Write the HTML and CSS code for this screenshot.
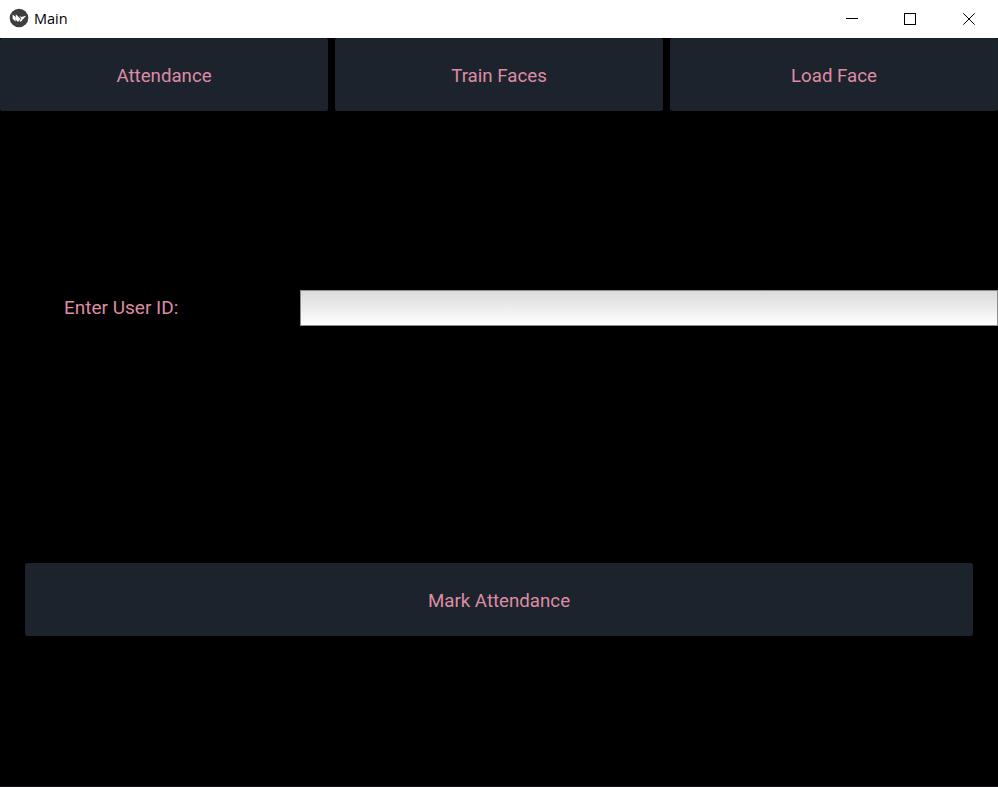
FILE: index.html
```html
<!DOCTYPE html>
<html lang="en">
<head>
<meta charset="utf-8">
<title>Main</title>
<link rel="stylesheet" href="styles.css">
</head>
<body>
<div class="window">
  <header class="titlebar">
    <svg class="logo" width="20" height="20" viewBox="0 0 20 20">
      <circle cx="10" cy="10" r="9.3" fill="#3e3e40"/>
      <path d="M3.6 6.4 L6.6 9 V13.6 L3.6 10.8Z M6.8 6.2 L11.4 10.8 L9 14 L6.8 11.8Z M10.4 7.8 L12.3 9 L17.2 7.8 L11.8 13.8 L10.4 13 L12.2 10.6Z" fill="#fff"/>
    </svg>
    <span class="title">Main</span>
    <div class="controls">
      <svg width="58" height="38" viewBox="0 0 58 38"><path d="M22 18.5H34" stroke="#000"/></svg>
      <svg width="58" height="38" viewBox="0 0 58 38"><rect x="22.5" y="13.5" width="11" height="11" fill="none" stroke="#000"/></svg>
      <svg width="58" height="38" viewBox="0 0 58 38"><path d="M23.3 13.3L34.7 24.7M34.7 13.3L23.3 24.7" stroke="#000"/></svg>
    </div>
  </header>
  <nav class="tabs">
    <button class="btn">Attendance</button>
    <button class="btn">Train Faces</button>
    <button class="btn">Load Face</button>
  </nav>
  <main class="form">
    <div class="row">
      <label class="label" for="user-id">Enter User ID:</label>
      <input class="field" id="user-id" type="text">
    </div>
    <button class="btn submit">Mark Attendance</button>
  </main>
</div>
</body>
</html>
```
FILE: styles.css
```css
* { box-sizing: border-box; }
body { margin: 0; background: #000; }
.window {
  display: flex;
  flex-direction: column;
  height: 787px;
  border-bottom: 1px solid #1c1117;
  font-family: Roboto, sans-serif;
  overflow: hidden;
}
.titlebar {
  display: flex;
  align-items: center;
  height: 38px;
  flex: none;
  padding-left: 9px;
  background: #fff;
  color: #000;
}
.logo { margin-top: -2px; }
.title {
  margin-left: 5px;
  font: 14.5px/20px "Open Sans", sans-serif;
}
.controls {
  display: flex;
  margin-left: auto;
}
.controls svg { display: block; }
.tabs {
  display: grid;
  grid-template-columns: repeat(3, 1fr);
  gap: 7px;
  height: 73px;
  flex: none;
}
.btn {
  margin: 0;
  padding: 3px 0 0;
  border: 1px solid #19232a;
  border-radius: 2px;
  background: #1c232c;
  color: #de8ca5;
  font: 18.7px/22px Roboto, sans-serif;
}
.form {
  display: flex;
  flex-direction: column;
  padding-top: 179px;
}
.row {
  display: flex;
  align-items: center;
  height: 36px;
}
.label {
  width: 300px;
  padding-left: 64px;
  color: #de8ca5;
  font-size: 19px;
  line-height: 22px;
}
.field {
  flex: 1;
  height: 36px;
  padding: 0 8px;
  border: 1px solid #8c8c8c;
  border-radius: 0;
  outline: 0;
  background: linear-gradient(#dadada, #fff);
  font: 19px Roboto, sans-serif;
}
.submit {
  height: 73px;
  margin: 237px 25px 0;
}
```
